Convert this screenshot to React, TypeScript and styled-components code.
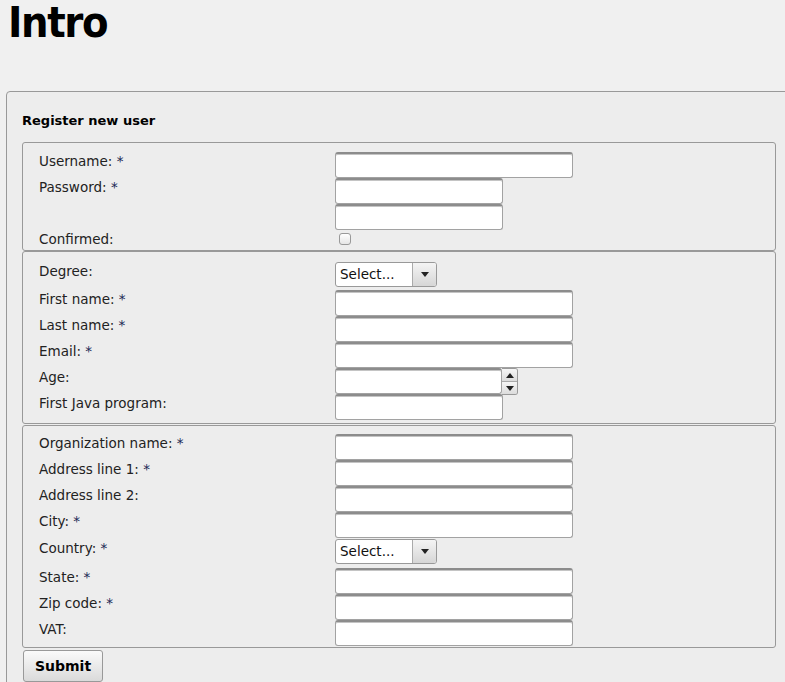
import React from 'react'
import styled, { createGlobalStyle } from 'styled-components'

const GlobalStyle = createGlobalStyle`
  html, body {
    margin: 0;
    padding: 0;
    background: #f0f0f0;
    font-family: 'DejaVu Sans', Verdana, sans-serif;
    color: #222;
  }
`

type Field = {
  label: string
  required?: boolean
  kind: 'text' | 'short' | 'select' | 'check' | 'number' | 'blank'
}

const account: Field[] = [
  { label: 'Username:', required: true, kind: 'text' },
  { label: 'Password:', required: true, kind: 'short' },
  { label: '', kind: 'short' },
  { label: 'Confirmed:', kind: 'check' },
]

const personal: Field[] = [
  { label: 'Degree:', kind: 'select' },
  { label: 'First name:', required: true, kind: 'text' },
  { label: 'Last name:', required: true, kind: 'text' },
  { label: 'Email:', required: true, kind: 'text' },
  { label: 'Age:', kind: 'number' },
  { label: 'First Java program:', kind: 'short' },
]

const organization: Field[] = [
  { label: 'Organization name:', required: true, kind: 'text' },
  { label: 'Address line 1:', required: true, kind: 'text' },
  { label: 'Address line 2:', kind: 'text' },
  { label: 'City:', required: true, kind: 'text' },
  { label: 'Country:', required: true, kind: 'select' },
  { label: 'State:', required: true, kind: 'text' },
  { label: 'Zip code:', required: true, kind: 'text' },
  { label: 'VAT:', kind: 'text' },
]

const Control = ({ kind }: { kind: Field['kind'] }) => {
  switch (kind) {
    case 'text':
      return <TextInput $w={238} />
    case 'short':
      return <TextInput $w={168} />
    case 'select':
      return (
        <SelectBox>
          <SelectText>Select...</SelectText>
          <SelectArrow>
            <svg width="8" height="5" viewBox="0 0 8 5">
              <path d="M0 0h8L4 5z" fill="#222" />
            </svg>
          </SelectArrow>
        </SelectBox>
      )
    case 'number':
      return (
        <Spinner>
          <TextInput $w={167} />
          <SpinButtons>
            <SpinButton>
              <svg width="8" height="5" viewBox="0 0 8 5">
                <path d="M0 5h8L4 0z" fill="#222" />
              </svg>
            </SpinButton>
            <SpinButton>
              <svg width="8" height="5" viewBox="0 0 8 5">
                <path d="M0 0h8L4 5z" fill="#222" />
              </svg>
            </SpinButton>
          </SpinButtons>
        </Spinner>
      )
    case 'check':
      return <CheckBox />
    default:
      return null
  }
}

// select rows are a bit taller than plain rows
const rowHeight = (f: Field, list: Field[]) => {
  if (f.kind === 'check') return 20
  if (f.kind === 'select') return list === organization ? 30 : 28
  return 26
}

const Section = ({ fields, $pt, $pb, $mt }: { fields: Field[]; $pt: number; $pb: number; $mt?: number }) => (
  <Fieldset $pt={$pt} $pb={$pb} $mt={$mt ?? 0}>
    {fields.map((f, i) => (
      <Row key={i} $h={rowHeight(f, fields)} $offset={f.kind === 'select' && fields === organization}>
        <Label>
          {f.label}
          {f.required && <Star> *</Star>}
        </Label>
        <Control kind={f.kind} />
      </Row>
    ))}
  </Fieldset>
)

export default function App() {
  return (
    <>
      <GlobalStyle />
      <Title>Intro</Title>
      <Panel>
        <Heading>Register new user</Heading>
        <Section fields={account} $pt={9} $pb={0} />
        <Section fields={personal} $pt={10} $pb={3} />
        <Section fields={organization} $pt={8} $pb={1} $mt={1} />
        <SubmitButton type="button">Submit</SubmitButton>
      </Panel>
    </>
  )
}

const Title = styled.h1`
  margin: 0;
  padding-left: 8px;
  font-family: 'DejaVu Sans Condensed', 'DejaVu Sans', sans-serif;
  font-stretch: condensed;
  font-weight: bold;
  font-size: 43px;
  letter-spacing: -1.4px;
  line-height: 44px;
  color: #000;
`

const Panel = styled.div`
  margin: 47px 0 0 6px;
  width: 754px;
  min-height: 600px;
  padding: 21px 16px 20px 15px;
  border: 1px solid #999;
  border-radius: 4px;
  background: #ededed;
`

const Heading = styled.div`
  font-weight: bold;
  font-size: 13px;
  line-height: 16px;
  color: #000;
  margin-bottom: 13px;
`

const Fieldset = styled.div<{ $pt: number; $pb: number; $mt: number }>`
  margin-top: ${p => p.$mt}px;
  padding: ${p => p.$pt}px 16px ${p => p.$pb}px 16px;
  border: 1px solid #999;
  border-radius: 3px;
`

const Row = styled.div<{ $h: number; $offset?: boolean }>`
  display: grid;
  grid-template-columns: 296px 1fr;
  align-items: start;
  height: ${p => p.$h}px;
  padding-top: ${p => (p.$offset ? 1 : 0)}px;
  box-sizing: border-box;
`

const Label = styled.div`
  padding-top: 1px;
  font-size: 13.5px;
  line-height: 16px;
  color: #222;
`

const Star = styled.span`
  color: #1c2a55;
`

const TextInput = styled.div<{ $w: number }>`
  box-sizing: border-box;
  width: ${p => p.$w}px;
  height: 26px;
  background: #fff;
  border: 1px solid #a2a2a2;
  border-top: 2px solid #8c8c8c;
  border-radius: 3px;
  box-shadow: inset 0 1px 0 #c4c4c4;
`

const SelectBox = styled.div`
  box-sizing: border-box;
  display: flex;
  width: 102px;
  height: 25px;
  border: 1px solid #999;
  border-radius: 3px;
  background: #fff;
  overflow: hidden;
`

const SelectText = styled.span`
  flex: 1;
  padding-left: 4px;
  font-size: 13.5px;
  line-height: 23px;
  color: #111;
`

const SelectArrow = styled.span`
  display: flex;
  align-items: center;
  justify-content: center;
  width: 23px;
  border-left: 1px solid #aaa;
  background: linear-gradient(#f4f4f4, #d6d6d6);
`

const Spinner = styled.div`
  display: flex;
`

const SpinButtons = styled.div`
  display: flex;
  flex-direction: column;
  width: 15px;
  height: 25px;
  border: 1px solid #999;
  border-left: none;
  border-radius: 0 3px 3px 0;
  overflow: hidden;
`

const SpinButton = styled.div`
  flex: 1;
  display: flex;
  align-items: center;
  justify-content: center;
  background: linear-gradient(#f6f6f6, #dcdcdc);

  & + & {
    border-top: 1px solid #aaa;
  }
`

const CheckBox = styled.div`
  box-sizing: border-box;
  width: 12px;
  height: 12px;
  margin: 3px 0 0 4px;
  border: 1px solid #999;
  border-radius: 3px;
  background: linear-gradient(#fff, #e6e6e6);
`

const SubmitButton = styled.button`
  display: block;
  margin: 2px 0 0 1px;
  width: 80px;
  height: 32px;
  padding: 0;
  border: 1px solid #999;
  border-radius: 3px;
  background: linear-gradient(#fafafa, #dadada);
  font-family: 'DejaVu Sans', Verdana, sans-serif;
  font-weight: bold;
  font-size: 14px;
  color: #000;
`
